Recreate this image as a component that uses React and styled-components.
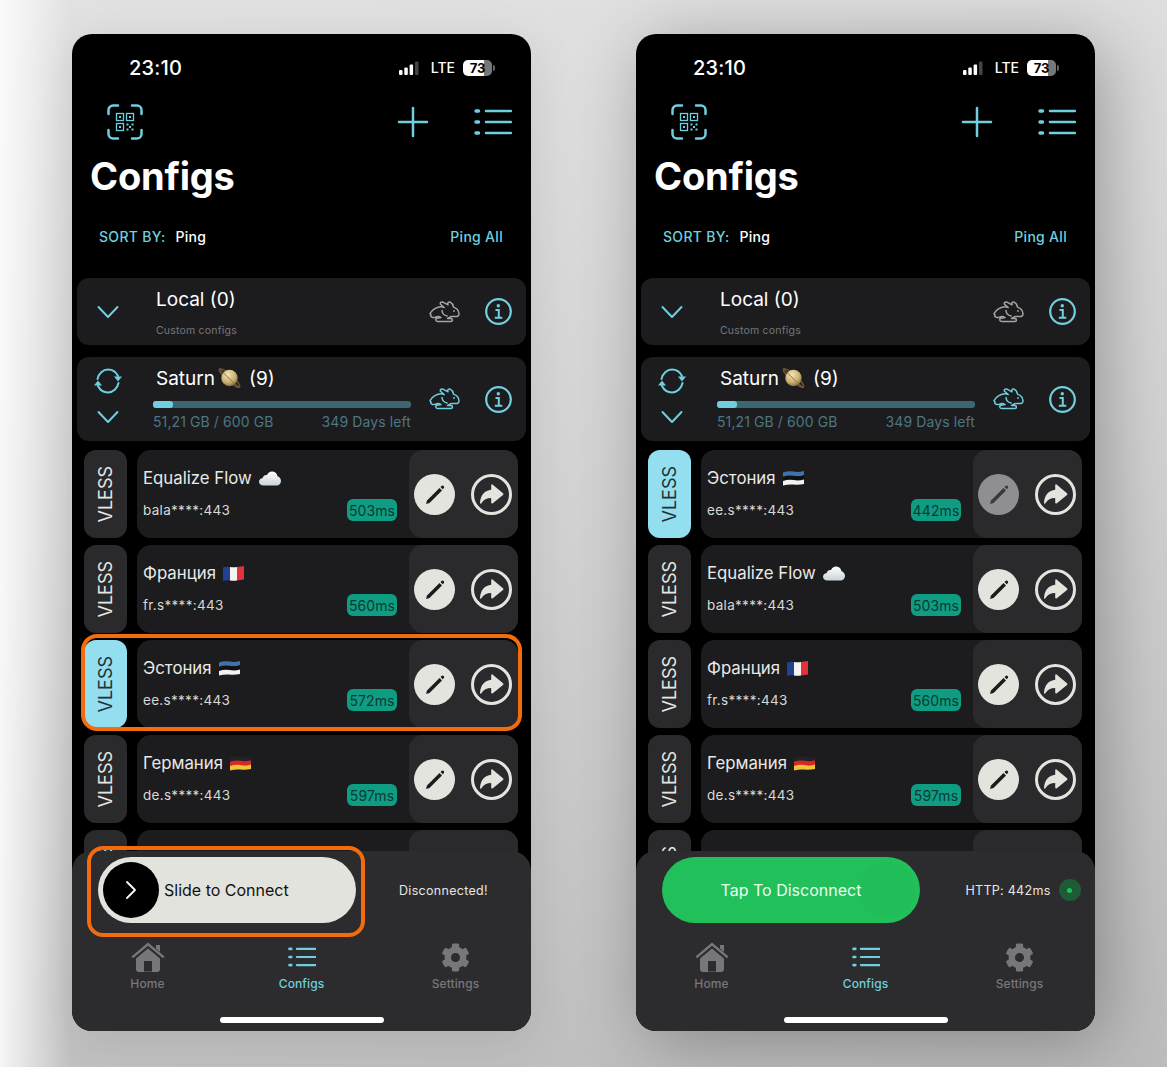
import React from "react";
import styled, { createGlobalStyle } from "styled-components";
import { FaCog } from "react-icons/fa";

const CYAN = "#6fcfdf";

const GlobalStyle = createGlobalStyle`
  html, body {
    margin: 0;
    padding: 0;
  }
  body {
    font-family: Inter, "Liberation Sans", sans-serif;
    background: #fff;
  }
  * {
    box-sizing: border-box;
  }
`;

const Page = styled.div`
  display: flex;
  gap: 105px;
  width: 1167px;
  height: 1067px;
  padding: 34px 0 0 72px;
  overflow: hidden;
  background:
    linear-gradient(90deg, rgba(255, 255, 255, 0.85) 0, rgba(255, 255, 255, 0) 70px),
    linear-gradient(172deg, #e2e2e2 0%, #d2d2d2 50%, #bcbcbc 100%);
`;
const Phone = styled.div`
  position: relative;
  flex: none;
  width: 459px;
  height: 997px;
  border-radius: 20px;
  overflow: hidden;
  background: #000;
  color: #fff;
  box-shadow: ${(p) =>
    p.$heavy ? "10px 10px 70px rgba(0, 0, 0, 0.3)" : "0 10px 50px rgba(0, 0, 0, 0.1)"};
`;
const StatusBar = styled.div`
  display: flex;
  align-items: center;
  justify-content: space-between;
  height: 66px;
  padding: 1px 39px 0 57px;
`;
const Time = styled.span`
  font-size: 20px;
  font-weight: 500;
  letter-spacing: 0.2px;
`;
const StatusRight = styled.div`
  display: flex;
  align-items: center;
  gap: 8px;
`;
const Lte = styled.span`
  font-size: 14px;
  font-weight: 500;
  margin: 0 0 0 4px;
`;
const Battery = styled.span`
  display: flex;
  align-items: center;
  justify-content: center;
  width: 29px;
  height: 16px;
  border-radius: 5px;
  background: linear-gradient(90deg, #fff 73%, #777 73%);
  color: #000;
  font-size: 13px;
  font-weight: 700;
  position: relative;
  &::after {
    content: "";
    position: absolute;
    right: -3px;
    top: 5px;
    width: 2px;
    height: 6px;
    border-radius: 0 2px 2px 0;
    background: #666;
  }
`;
const Toolbar = styled.div`
  display: flex;
  align-items: center;
  height: 44px;
  padding: 0 19px 0 35px;
`;
const Spacer = styled.div`
  flex: 1;
`;
const ToolIcon = styled.span`
  display: flex;
  margin-left: ${(p) => p.$gap || 0}px;
`;
const Title = styled.h1`
  margin: 0;
  padding-left: 18px;
  font-size: 38px;
  font-weight: 700;
  line-height: 64px;
  letter-spacing: -0.2px;
`;
const SortRow = styled.div`
  display: flex;
  align-items: center;
  height: 30px;
  margin-top: 13px;
  padding: 0 28px 0 27px;
  font-size: 14px;
  font-weight: 500;
  letter-spacing: 0.3px;
`;
const SortLabel = styled.span`
  color: ${CYAN};
  margin-right: 10px;
`;
const PingAll = styled.span`
  color: ${CYAN};
  margin-left: auto;
`;
const Groups = styled.div`
  display: flex;
  flex-direction: column;
  gap: 12px;
  margin: 27px 5px 0;
`;
const Group = styled.div`
  display: flex;
  align-items: center;
  height: ${(p) => p.$height}px;
  padding-right: 15px;
  border-radius: 12px;
  background: #1c1c1e;
`;
const GroupLeft = styled.div`
  display: flex;
  flex-direction: column;
  align-items: center;
  flex: none;
  gap: ${(p) => p.$gap || 0}px;
  width: 61px;
  margin-right: 15px;
  padding-bottom: ${(p) => (p.$gap ? 6 : 0)}px;
`;
const GroupBody = styled.div`
  align-self: stretch;
  width: 258px;
  flex: none;
  margin-right: 18px;
  padding-top: 8px;
`;
const GroupTitle = styled.div`
  display: flex;
  align-items: center;
  height: 26px;
  margin-left: 3px;
  font-size: 19px;
`;
const GroupSub = styled.div`
  margin: 12px 0 0 3px;
  font-size: 10.5px;
  line-height: 14px;
  letter-spacing: 0.2px;
  color: #77777a;
`;
const TitleEmoji = styled.span`
  display: flex;
  margin: 0 7px 0 2px;
`;
const Progress = styled.div`
  height: 7px;
  margin-top: 10px;
  border-radius: 3px;
  background: #3c6670;
`;
const ProgressFill = styled.div`
  width: 20px;
  height: 100%;
  border-radius: 3px;
  background: ${CYAN};
`;
const Caption = styled.div`
  display: flex;
  justify-content: space-between;
  margin-top: 6px;
  font-size: 14px;
  line-height: 16px;
  letter-spacing: 0.1px;
  color: #4d7682;
`;
const GroupRight = styled.div`
  display: flex;
  align-items: center;
  gap: 25px;
`;
const Rows = styled.div`
  display: flex;
  flex-direction: column;
  gap: 7px;
  margin: 9px 13px 0 12px;
`;
const Row = styled.div`
  position: relative;
  display: grid;
  grid-template-columns: 43px 1fr;
  gap: 10px;
  flex: none;
  height: 88px;
`;
const Ring = styled.div`
  position: absolute;
  top: ${(p) => p.$inset[0]}px;
  right: ${(p) => p.$inset[1]}px;
  bottom: ${(p) => p.$inset[2]}px;
  left: ${(p) => p.$inset[3]}px;
  border: 4px solid #f26c0d;
  border-radius: 16px;
  pointer-events: none;
`;
const Protocol = styled.div`
  display: flex;
  align-items: center;
  justify-content: center;
  border-radius: 12px;
  background: ${(p) => (p.$active ? "#93dff0" : "#2a2a2c")};
  color: ${(p) => (p.$active ? "#1f3238" : "#e6e6e1")};
  font-size: 18px;
`;
const Vertical = styled.span`
  writing-mode: vertical-rl;
  transform: rotate(180deg);
`;
const RowMain = styled.div`
  display: flex;
  border-radius: 14px;
  background: #1c1c1e;
  overflow: hidden;
`;
const RowInfo = styled.div`
  flex: 1;
  padding: 16px 12px 0 6px;
`;
const RowName = styled.div`
  display: flex;
  align-items: center;
  gap: 7px;
  height: 24px;
  font-size: 16.8px;
  color: #e9e9e6;
`;
const RowBottom = styled.div`
  display: flex;
  align-items: center;
  justify-content: space-between;
  height: 22px;
  margin-top: 9px;
`;
const Host = styled.span`
  font-size: 13.5px;
  letter-spacing: 0.3px;
  color: #d8d8d4;
`;
const Ping = styled.span`
  display: flex;
  align-items: center;
  justify-content: center;
  width: 50px;
  height: 22px;
  border-radius: 6px;
  background: #0e9d82;
  color: #0b3a33;
  font-size: 14px;
  letter-spacing: 0.1px;
`;
const Actions = styled.div`
  display: flex;
  align-items: center;
  justify-content: space-between;
  flex: none;
  width: 109px;
  padding: 0 6px 0 5px;
  border-radius: 14px 0 0 14px;
  background: #2a2a2c;
`;
const PencilButton = styled.span`
  display: flex;
  align-items: center;
  justify-content: center;
  width: 41px;
  height: 41px;
  border-radius: 50%;
  background: ${(p) => (p.$muted ? "#8e8e93" : "#e4e4df")};
  color: ${(p) => (p.$muted ? "#3a3a3c" : "#1c1c1e")};
`;
const ShareButton = styled.span`
  display: flex;
  align-items: center;
  justify-content: center;
  width: 41px;
  height: 41px;
  border: 3px solid #e4e4df;
  border-radius: 50%;
  color: #e4e4df;
`;
const BottomPanel = styled.div`
  position: absolute;
  left: 0;
  right: 0;
  bottom: 0;
  height: 180px;
  border-radius: 20px;
  background: #2c2c2e;
`;
const ConnectRow = styled.div`
  display: flex;
  align-items: center;
  height: 66px;
  margin-top: 6px;
  padding-left: 26px;
`;
const Slider = styled.div`
  position: relative;
  display: flex;
  align-items: center;
  flex: none;
  width: 258px;
  height: 66px;
  padding-left: 5px;
  border-radius: 33px;
  background: #e3e3de;
  color: #111;
  font-size: 16px;
`;
const Knob = styled.span`
  display: flex;
  align-items: center;
  justify-content: center;
  width: 56px;
  height: 56px;
  margin-right: 5px;
  border-radius: 50%;
  background: #000;
`;
const DisconnectButton = styled.div`
  position: relative;
  display: flex;
  align-items: center;
  justify-content: center;
  flex: none;
  width: 258px;
  height: 66px;
  border-radius: 33px;
  background: #22c05a;
  color: #eafff0;
  font-size: 16px;
`;
const GhostKnob = styled.span`
  position: absolute;
  top: 5px;
  right: 5px;
  width: 56px;
  height: 56px;
  border-radius: 50%;
  background: #21bd58;
`;
const DisconnectLabel = styled.span`
  position: relative;
`;
const StatusText = styled.div`
  display: flex;
  align-items: center;
  justify-content: center;
  flex: 1;
  gap: 8px;
  padding-left: ${(p) => p.$pad || 0}px;
  font-size: 12.5px;
  letter-spacing: 0.3px;
  color: #e6e6e1;
`;
const Dot = styled.span`
  display: flex;
  align-items: center;
  justify-content: center;
  width: 22px;
  height: 22px;
  border-radius: 50%;
  background: #1e5b37;
  &::after {
    content: "";
    width: 5px;
    height: 5px;
    border-radius: 50%;
    background: #22c05a;
  }
`;
const Tabs = styled.div`
  display: grid;
  grid-template-columns: repeat(3, 154px);
  justify-content: center;
  margin-top: 19px;
`;
const Tab = styled.div`
  display: flex;
  flex-direction: column;
  align-items: center;
  color: ${(p) => (p.$active ? CYAN : "#77777a")};
  font-size: 12px;
  font-weight: 500;
  letter-spacing: 0.1px;
`;
const TabIcon = styled.span`
  display: flex;
  align-items: center;
  justify-content: center;
  height: 30px;
  margin-bottom: 4px;
`;
const HomeBar = styled.div`
  position: absolute;
  left: 148px;
  bottom: 8px;
  width: 164px;
  height: 6px;
  border-radius: 3px;
  background: #fff;
`;

const Signal = () => (
  <svg width="20" height="14" viewBox="0 0 20 14">
    <rect x="0" y="9" width="3.5" height="5" rx="1" fill="#fff" />
    <rect x="5.3" y="6.500" width="3.5" height="7.500" rx="1" fill="#fff" />
    <rect x="10.6" y="3.500" width="3.500" height="10.500" rx="1" fill="#fff" />
    <rect x="16" y="0.500" width="3.500" height="13.500" rx="1" fill="#444" />
  </svg>
);

const QrIcon = () => (
  <svg width="36" height="36" viewBox="0 0 36 36" fill="none" stroke={CYAN}>
    <path
      d="M1.500 10V6a4.500 4.500 0 0 1 4.500-4.500h5M25 1.500h5A4.500 4.500 0 0 1 34.500 6v4M1.500 26v4A4.500 4.500 0 0 0 6 34.500h5M25 34.500h5a4.500 4.500 0 0 0 4.500-4.500v-4"
      strokeWidth="2.500"
      strokeLinecap="round"
    />
    <g strokeWidth="1.300">
      <rect x="9.500" y="9.500" width="7" height="7" />
      <rect x="19.500" y="9.500" width="7" height="7" />
      <rect x="9.500" y="19.500" width="7" height="7" />
    </g>
    <g fill={CYAN} stroke="none">
      <rect x="12" y="12" width="2" height="2" />
      <rect x="22" y="12" width="2" height="2" />
      <rect x="12" y="22" width="2" height="2" />
      <rect x="19.500" y="19.500" width="2" height="2" />
      <rect x="24.500" y="19.500" width="2" height="2" />
      <rect x="22" y="22" width="2" height="2" />
      <rect x="19.500" y="24.500" width="2" height="2" />
      <rect x="24.500" y="24.500" width="2" height="2" />
    </g>
  </svg>
);

const PlusIcon = () => (
  <svg width="32" height="32" viewBox="0 0 32 32" stroke={CYAN} strokeWidth="2.500" strokeLinecap="round">
    <path d="M16 2v28M2 16h28" />
  </svg>
);

const ListIcon = ({ width = 38, height = 26, stroke = 2.500 }) => (
  <svg width={width} height={height} viewBox="0 0 38 26" stroke={CYAN} strokeWidth={stroke} strokeLinecap="round">
    <path d="M12 2h25M12 13h25M12 24h25" />
    <path d="M2 2h2.500M2 13h2.500M2 24h2.500" strokeWidth="3.500" />
  </svg>
);

const Chevron = () => (
  <svg width="22" height="14" viewBox="0 0 22 14" fill="none" stroke={CYAN} strokeWidth="2" strokeLinecap="round" strokeLinejoin="round">
    <path d="M1.500 2L11 12l9.500-10" />
  </svg>
);

const SyncIcon = () => (
  <svg width="30" height="26" viewBox="0 0 30 26" fill="none" stroke={CYAN} strokeWidth="2" strokeLinecap="round">
    <path d="M4.500 11C5.500 5.500 10 1.500 15 1.500c4.500 0 8 2.500 10 6.500" />
    <path d="M25.500 15c-1 5.500-5.500 9.500-10.500 9.500-4.500 0-8-2.500-10-6.500" />
    <path d="M21 8.500h8L25 13.500z" fill={CYAN} stroke="none" />
    <path d="M1 17.500h8L5 12.500z" fill={CYAN} stroke="none" />
  </svg>
);

const InfoIcon = () => (
  <svg width="27" height="27" viewBox="0 0 27 27" fill="none" stroke={CYAN}>
    <circle cx="13.500" cy="13.500" r="12.300" strokeWidth="2.200" />
    <path d="M10.500 12h3.300v7.500M9.800 19.800h7.500" strokeWidth="2" />
    <circle cx="13.300" cy="7.800" r="1.700" fill={CYAN} stroke="none" />
  </svg>
);

const Rabbit = ({ color }) => (
  <svg width="31" height="22" viewBox="0 0 31 22" fill="none" stroke={color} strokeWidth="1.500" strokeLinejoin="round" strokeLinecap="round">
    <path d="M1 12.500C3 8.500 8 5.500 13 5.800l2.200.7L11.500 3.300C10.700 1.800 12.300.5 14 1.200l5 2.600C18.200 1.900 19.600.5 21.200 1.200c1.800.9 3 3 3.300 4.900 2.800 1 5.300 3.700 5.500 6.700.1 1.800-1.300 2.700-3 2.700h-4c-1.800 0-2.800 1.200-4.500 2h3.300c2.200 0 2.200 3 0 3H9c-2.600 0-3-2.700-1-3.200l4-.8c-1.800-1.200-3.800-1.200-5.500-.3C4 17.300.8 15.700 2 14z" />
    <path d="M13 9.500c.2 2.700 2 4.800 5 5.500" />
    <circle cx="25" cy="10" r="0.900" fill={color} stroke="none" />
  </svg>
);

const Pencil = () => (
  <svg width="24" height="24" viewBox="0 0 24 24" fill="currentColor">
    <path d="M3 22l1-3.500L16.500 6 19 8.500 6.500 21z" />
    <path d="M17.500 5l1-1c.7-.7 1.600-.7 2.200 0s.6 1.500 0 2.200l-1 1z" />
  </svg>
);

const ShareArrow = () => (
  <svg width="27" height="27" viewBox="0 0 27 27" fill="currentColor">
    <path d="M14.500 3.500c-.6-.4-1.300 0-1.300.8v4.400C7 9.300 2.500 13.500 2 22c0 .8.800 1 1.200.4C5.500 18.800 8.800 17 13.200 17v4.600c0 .8.700 1.200 1.300.8l10.500-8.500c.6-.5.600-1.200 0-1.700z" />
  </svg>
);

const Cloud = () => (
  <svg width="22" height="15" viewBox="0 0 22 15">
    <defs>
      <linearGradient id="cloudFill" x1="0" y1="0" x2="0" y2="1">
        <stop offset="0" stopColor="#fff" />
        <stop offset="1" stopColor="#c9d3da" />
      </linearGradient>
    </defs>
    <path d="M4.500 14.500C2 14.500 0 13 0 10.800c0-2 1.500-3.300 3.500-3.500C4 4.800 6 3.500 8 4c1-2.300 3-3.700 5.500-3.500 2.800.2 4.700 2.200 5 4.800 1.800.5 3.500 2.300 3.500 4.700 0 2.500-2 4.500-4.500 4.500z" fill="url(#cloudFill)" />
  </svg>
);

const SaturnEmoji = () => (
  <svg width="25" height="26" viewBox="0 0 26 26">
    <defs>
      <radialGradient id="saturnFill" cx="0.400" cy="0.300" r="0.800">
        <stop offset="0" stopColor="#f4e6b8" />
        <stop offset="0.600" stopColor="#c9ad6e" />
        <stop offset="1" stopColor="#6f5a34" />
      </radialGradient>
    </defs>
    <ellipse cx="13" cy="13" rx="14" ry="3" transform="rotate(42 13 13)" fill="none" stroke="#6a5030" strokeWidth="1.500" />
    <circle cx="13" cy="13" r="8.500" fill="url(#saturnFill)" />
    <path d="M3 4 C8 9 17 18 23 23" fill="none" stroke="#8d7145" strokeWidth="1" />
  </svg>
);

const wave = (y, h, w) =>
  `M0 ${y + 1.500} Q${w / 4} ${y - 0.500} ${w / 2} ${y + 0.500} T${w} ${y} V${y + h} Q${(w * 3) / 4} ${y + h + 1} ${w / 2} ${y + h + 0.500} T0 ${y + h + 1.500} Z`;

const StripeFlag = ({ colors }) => (
  <svg width="21" height="15" viewBox="0 0 21 15">
    {colors.map((c, i) => (
      <path key={c} d={wave(i * 4.300, 4.500, 21)} fill={c} />
    ))}
  </svg>
);

const FranceFlag = () => (
  <svg width="21" height="15" viewBox="0 0 21 15">
    <path d="M0 1.500Q3.500 .5 7 1V14.500Q3.500 14 0 15z" fill="#23418f" />
    <path d="M7 1Q10.500 1.500 14 1V14.500Q10.500 15 7 14.500z" fill="#f4f4f4" />
    <path d="M14 1Q17.500 .5 21 0V13.500Q17.500 14 14 14.500z" fill="#e0313c" />
  </svg>
);

const Home = () => (
  <svg width="34" height="30" viewBox="0 0 34 30" fill="#77777a">
    <path d="M25 3h4v7l-4-3.500z" />
    <path d="M17 0.500L0.500 14.500l1.500 1.800L17 3.800l15 12.500 1.500-1.800z" />
    <path d="M17 6.500L5 16.500V27a3 3 0 0 0 3 3h18a3 3 0 0 0 3-3V16.500zM21 29.500H13V19h8z" fillRule="evenodd" />
  </svg>
);

const nameFlags = {
  "Equalize Flow": <Cloud />,
  Франция: <FranceFlag />,
  Эстония: <StripeFlag colors={["#3f72af", "#111", "#f2f2f2"]} />,
  Германия: <StripeFlag colors={["#222", "#d8272c", "#f2c230"]} />,
};

const ConfigRow = ({ name, host, ping, active, muted, hilite }) => (
  <Row>
    <Protocol $active={active}>
      <Vertical>VLESS</Vertical>
    </Protocol>
    <RowMain>
      <RowInfo>
        <RowName>
          {name}
          {nameFlags[name]}
        </RowName>
        <RowBottom>
          <Host>{host}</Host>
          {ping && <Ping>{ping}</Ping>}
        </RowBottom>
      </RowInfo>
      <Actions>
        <PencilButton $muted={muted}>
          <Pencil />
        </PencilButton>
        <ShareButton>
          <ShareArrow />
        </ShareButton>
      </Actions>
    </RowMain>
    {hilite && <Ring $inset={[-6, -4, -3, -3]} />}
  </Row>
);

const Screen = ({ rows, connected }) => (
  <Phone $heavy={connected}>
    <StatusBar>
      <Time>23:10</Time>
      <StatusRight>
        <Signal />
        <Lte>LTE</Lte>
        <Battery>73</Battery>
      </StatusRight>
    </StatusBar>
    <Toolbar>
      <QrIcon />
      <Spacer />
      <PlusIcon />
      <ToolIcon $gap={45}>
        <ListIcon />
      </ToolIcon>
    </Toolbar>
    <Title>Configs</Title>
    <SortRow>
      <SortLabel>SORT BY:</SortLabel>
      Ping
      <PingAll>Ping All</PingAll>
    </SortRow>
    <Groups>
      <Group $height={67}>
        <GroupLeft>
          <Chevron />
        </GroupLeft>
        <GroupBody>
          <GroupTitle>Local (0)</GroupTitle>
          <GroupSub>Custom configs</GroupSub>
        </GroupBody>
        <GroupRight>
          <Rabbit color="#a5a5a5" />
          <InfoIcon />
        </GroupRight>
      </Group>
      <Group $height={84}>
        <GroupLeft $gap={16}>
          <SyncIcon />
          <Chevron />
        </GroupLeft>
        <GroupBody>
          <GroupTitle>
            Saturn
            <TitleEmoji>
              <SaturnEmoji />
            </TitleEmoji>
            (9)
          </GroupTitle>
          <Progress>
            <ProgressFill />
          </Progress>
          <Caption>
            <span>51,21 GB / 600 GB</span>
            <span>349 Days left</span>
          </Caption>
        </GroupBody>
        <GroupRight>
          <Rabbit color={CYAN} />
          <InfoIcon />
        </GroupRight>
      </Group>
    </Groups>
    <Rows>
      {rows.map((r) => (
        <ConfigRow key={r.name} {...r} />
      ))}
    </Rows>
    <BottomPanel>
      <ConnectRow>
        {connected ? (
          <>
            <DisconnectButton>
              <GhostKnob />
              <DisconnectLabel>Tap To Disconnect</DisconnectLabel>
            </DisconnectButton>
            <StatusText $pad={31}>
              HTTP: 442ms
              <Dot />
            </StatusText>
          </>
        ) : (
          <>
            <Slider>
              <Knob>
                <svg width="12" height="20" viewBox="0 0 12 20" fill="none" stroke="#fff" strokeWidth="1.800" strokeLinecap="round" strokeLinejoin="round">
                  <path d="M2 2l8 8-8 8" />
                </svg>
              </Knob>
              Slide to Connect
              <Ring $inset={[-11, -9, -14, -11]} />
            </Slider>
            <StatusText>Disconnected!</StatusText>
          </>
        )}
      </ConnectRow>
      <Tabs>
        <Tab>
          <TabIcon>
            <Home />
          </TabIcon>
          Home
        </Tab>
        <Tab $active>
          <TabIcon>
            <ListIcon width={28} height={20} stroke={2.800} />
          </TabIcon>
          Configs
        </Tab>
        <Tab>
          <TabIcon>
            <FaCog size={29} />
          </TabIcon>
          Settings
        </Tab>
      </Tabs>
      <HomeBar />
    </BottomPanel>
  </Phone>
);

const leftRows = [
  { name: "Equalize Flow", host: "bala****:443", ping: "503ms" },
  { name: "Франция", host: "fr.s****:443", ping: "560ms" },
  { name: "Эстония", host: "ee.s****:443", ping: "572ms", active: true, hilite: true },
  { name: "Германия", host: "de.s****:443", ping: "597ms" },
  { name: "", host: "", ping: "" },
];

const rightRows = [
  { name: "Эстония", host: "ee.s****:443", ping: "442ms", active: true, muted: true },
  { name: "Equalize Flow", host: "bala****:443", ping: "503ms" },
  { name: "Франция", host: "fr.s****:443", ping: "560ms" },
  { name: "Германия", host: "de.s****:443", ping: "597ms" },
  { name: "", host: "", ping: "" },
];

export default function App() {
  return (
    <>
      <GlobalStyle />
      <Page>
        <Screen rows={leftRows} />
        <Screen rows={rightRows} connected />
      </Page>
    </>
  );
}
